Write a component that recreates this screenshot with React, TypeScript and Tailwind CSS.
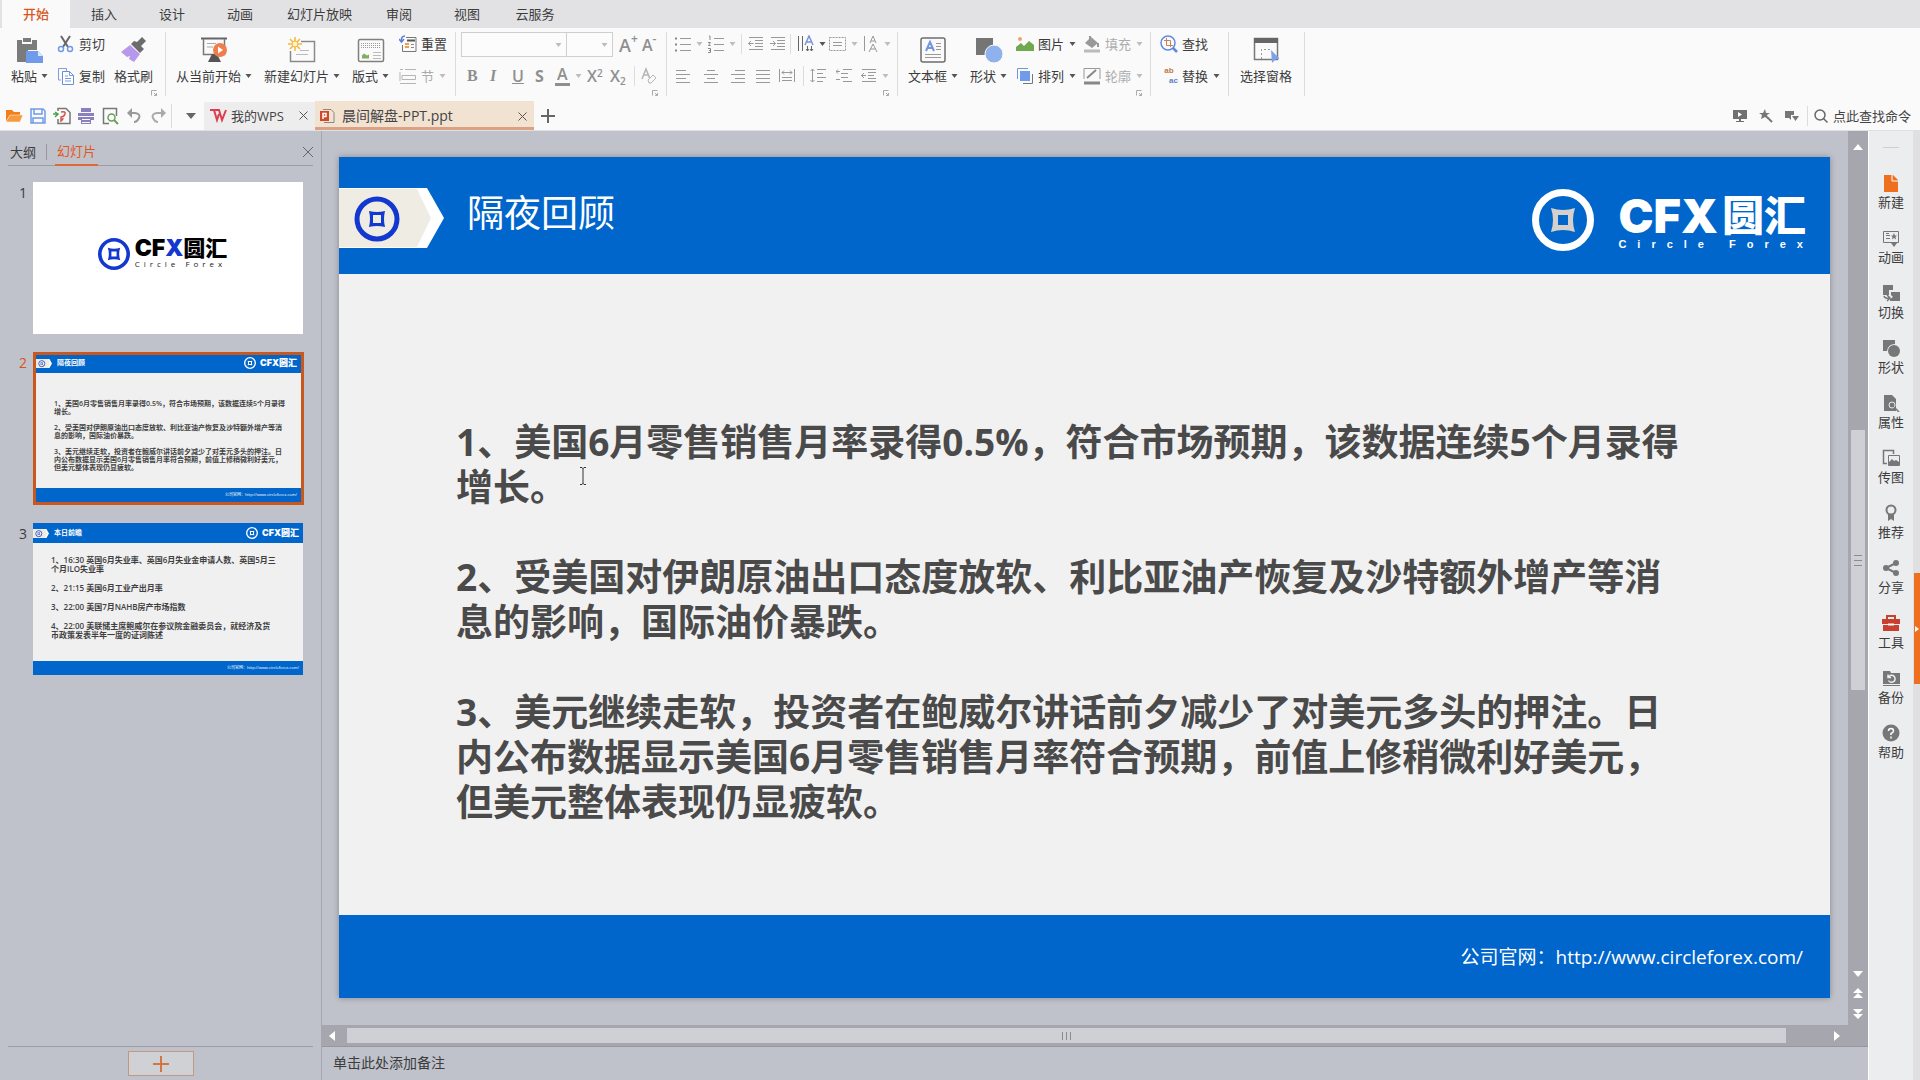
import type { ReactNode } from 'react';

const menuTabs = ['开始', '插入', '设计', '动画', '幻灯片放映', '审阅', '视图', '云服务'];

const overnightLines = [
  ['1、美国6月零售销售月率录得0.5%，符合市场预期，该数据连续5个月录得', '增长。'],
  ['2、受美国对伊朗原油出口态度放软、利比亚油产恢复及沙特额外增产等消', '息的影响，国际油价暴跌。'],
  [
    '3、美元继续走软，投资者在鲍威尔讲话前夕减少了对美元多头的押注。日',
    '内公布数据显示美国6月零售销售月率符合预期，前值上修稍微利好美元，',
    '但美元整体表现仍显疲软。',
  ],
];

const previewLines = [
  ['1、16:30 英国6月失业率、英国6月失业金申请人数、英国5月三', '个月ILO失业率'],
  ['2、21:15 美国6月工业产出月率'],
  ['3、22:00 美国7月NAHB房产市场指数'],
  ['4、22:00 美联储主席鲍威尔在参议院金融委员会，就经济及货', '币政策发表半年一度的证词陈述'],
];

interface IconProps {
  w?: number;
  h?: number;
  children: ReactNode;
  className?: string;
}

function Icon({ w = 18, h = 18, children, className = '' }: IconProps) {
  return (
    <svg width={w} height={h} viewBox={`0 0 ${w} ${h}`} fill="none" className={`shrink-0 ${className}`} aria-hidden="true">
      {children}
    </svg>
  );
}

function Caret({ dim = false }: { dim?: boolean }) {
  return (
    <Icon w={7} h={4}>
      <path d="M0.5 0h6L3.5 4z" fill={dim ? '#bdbdbd' : '#555'} />
    </Icon>
  );
}

function Launcher() {
  return (
    <Icon w={6} h={6} className="absolute right-2 bottom-0">
      <path d="M0.5 5.500V.5h5M3 3l2.500 2.500M5.500 3v2.500H3" stroke="#aaa" />
    </Icon>
  );
}

function Group({ width, children, launcher = false }: { width: string; children: ReactNode; launcher?: boolean }) {
  return (
    <div className={`relative flex h-16 shrink-0 border-r border-[#dcdcdc] ${width}`}>
      {children}
      {launcher && <Launcher />}
    </div>
  );
}

function BigButton({ icon, label, caret = false }: { icon: ReactNode; label: string; caret?: boolean }) {
  return (
    <button type="button" className="flex shrink-0 flex-col items-center gap-px pt-[5px]">
      {icon}
      <span className="flex h-6 items-center gap-1 whitespace-nowrap">
        {label}
        {caret && <Caret />}
      </span>
    </button>
  );
}

interface SmallButtonProps {
  icon: ReactNode;
  label: string;
  caret?: boolean;
  dim?: boolean;
}

function SmallButton({ icon, label, caret = false, dim = false }: SmallButtonProps) {
  return (
    <button type="button" className={`flex h-6 items-center gap-1 whitespace-nowrap ${dim ? 'text-[#ababab]' : ''}`}>
      {icon}
      {label}
      {caret && <span className="ml-px flex"><Caret dim={dim} /></span>}
    </button>
  );
}

function Tool({ width, label, children }: { width: string; label: string; children: ReactNode }) {
  return (
    <button type="button" aria-label={label} className={`flex h-6 shrink-0 items-center gap-[5px] text-[#8f8f8f] ${width}`}>
      {children}
    </button>
  );
}

function Rule() {
  return <span className="mr-[6px] h-5 w-px shrink-0 bg-[#dcdcdc]" />;
}

function RibbonClipboard() {
  return (
    <Group width="w-[166px] pl-[11px]" launcher>
      <BigButton
        label="粘贴"
        caret
        icon={
          <Icon w={28} h={26}>
            <path d="M1 3h6V1h8v2h6v10h-9v12H1z" fill="#7b7b7b" />
            <path d="M6 3h10v4H6z" fill="#fafafb" />
            <path d="M7 2h8v3H7z" fill="#7b7b7b" />
            <path d="M10 14h12l5 5v7H10z" fill="#6f9bea" />
            <path d="M22 14v5h5z" fill="#dbe6fb" />
          </Icon>
        }
      />
      <div className="ml-[9px] flex flex-col gap-2">
        <SmallButton
          label="剪切"
          icon={
            <Icon>
              <path d="M4 1l7 11M13 1L6 12" stroke="#666" strokeWidth="2" />
              <circle cx="4" cy="14" r="2.500" stroke="#6f9bea" strokeWidth="1.500" />
              <circle cx="13" cy="14" r="2.500" stroke="#6f9bea" strokeWidth="1.500" />
            </Icon>
          }
        />
        <SmallButton
          label="复制"
          icon={
            <Icon>
              <path d="M4 13H1.500V1.500h8V4" stroke="#7f9fd8" />
              <path d="M5.500 4.500h7l4 4v9h-11z" stroke="#6f8fd0" fill="#fff" />
              <path d="M12.500 4.500v4h4M8 9h3M8 11.500h6M8 14h6" stroke="#6f9bea" />
            </Icon>
          }
        />
      </div>
      <div className="ml-[9px] flex">
        <BigButton
          label="格式刷"
          icon={
            <Icon w={26} h={26}>
              <path d="M16 5l5-5 4 4-5 5 3 3-4 4L10 7l3-3z" fill="#6c6c6c" />
              <path d="M9 8l10 9-6 8-5-3 1-3-3 1-6-5z" fill="#b898ea" />
            </Icon>
          }
        />
      </div>
    </Group>
  );
}

function RibbonSlides() {
  return (
    <Group width="w-[290px] gap-3 pl-[10px]">
      <BigButton
        label="从当前开始"
        caret
        icon={
          <Icon w={28} h={26}>
            <path d="M1 1.500h26" stroke="#666" strokeWidth="2" />
            <path d="M3.500 2v15.500h21V2" stroke="#777" strokeWidth="1.500" />
            <path d="M7 6.500h9M7 10h6" stroke="#aaa" />
            <path d="M12 17h5l4 8H8z" fill="#555" />
            <circle cx="20" cy="13" r="7" fill="#ee7f4b" />
            <path d="M18 9.500v7l5-3.500z" fill="#fff" />
          </Icon>
        }
      />
      <BigButton
        label="新建幻灯片"
        caret
        icon={
          <Icon w={28} h={26}>
            <path d="M13 4.500h13.500v20h-24V14" stroke="#8a8a8a" strokeWidth="1.500" />
            <path d="M12 13.500h9M8 17.500h12" stroke="#bbb" />
            <path d="M7 0v14M0 7h14M2 2l10 10M12 2L2 12" stroke="#f6b73c" strokeWidth="1.500" />
            <circle cx="7" cy="7" r="3" fill="#fff3c9" stroke="#f6b73c" />
          </Icon>
        }
      />
      <BigButton
        label="版式"
        caret
        icon={
          <Icon w={28} h={26}>
            <rect x="1.500" y="2.500" width="25" height="22" rx="1.500" stroke="#808080" strokeWidth="1.500" />
            <path d="M4 6.500h20M4 8.500h20M4 10.500h20" stroke="#999" strokeDasharray="1 1" />
            <path d="M16 15.500h8M16 18.500h8M16 21.500h8" stroke="#bbb" />
            <path d="M5 21.500v-3l2-2 3 2 2-1v4z" fill="#7fae5e" />
          </Icon>
        }
      />
      <div className="ml-[-2px] flex flex-col gap-2">
        <SmallButton
          label="重置"
          icon={
            <Icon>
              <path d="M7 2.500h10v14H3.500V10" stroke="#777" />
              <path d="M8 5.500h8" stroke="#555" strokeWidth="2" />
              <path d="M6 9h4M6 12h4" stroke="#eda04c" strokeWidth="2" />
              <path d="M12 9.500h3M12 12.500h3" stroke="#888" />
              <path d="M6 1Q2 1 2.500 6M0 4l2.500 3L5 4" stroke="#5f80d8" strokeWidth="1.500" />
            </Icon>
          }
        />
        <SmallButton
          label="节"
          caret
          dim
          icon={
            <Icon>
              <path d="M1 2.500h3M6 2.500h11M1 16.500h16M3 8.500h13.500v4H3zM1 5v9" stroke="#b5b5b5" />
            </Icon>
          }
        />
      </div>
    </Group>
  );
}

function RibbonFont() {
  return (
    <Group width="w-[211px] pl-[5px]" launcher>
      <div className="flex flex-col gap-[7px]">
        <div className="flex h-[25px] items-center">
          <button type="button" aria-label="字体" className="flex h-[25px] w-[106px] items-center justify-end border border-[#cfcfcf] bg-[#fcfcfc] pr-1">
            <Caret dim />
          </button>
          <button type="button" aria-label="字号" className="flex h-[25px] w-[46px] items-center justify-end border border-l-0 border-[#cfcfcf] bg-[#fcfcfc] pr-1">
            <Caret dim />
          </button>
          <button type="button" className="ml-[6px] flex w-[23px] items-start text-lg leading-6 font-semibold text-[#8f8f8f]">
            A<span className="text-xs leading-3">+</span>
          </button>
          <button type="button" className="flex items-start text-base leading-6 font-semibold text-[#8f8f8f]">
            A<span className="text-xs leading-3">-</span>
          </button>
        </div>
        <div className="flex items-center pl-[6px] text-base text-[#8f8f8f]">
          <Tool width="w-[23px]" label="加粗"><b className="font-['Liberation_Serif']">B</b></Tool>
          <Tool width="w-[22px]" label="倾斜"><i className="font-['Liberation_Serif'] font-bold">I</i></Tool>
          <Tool width="w-[23px]" label="下划线"><u className="font-semibold">U</u></Tool>
          <Tool width="w-[20px]" label="阴影"><span className="font-bold">S</span></Tool>
          <Tool width="w-[32px]" label="字体颜色">
            <span className="border-b-3 border-[#8f8f8f] px-[2px] leading-[17px] font-semibold">A</span>
            <Caret dim />
          </Tool>
          <Tool width="w-[23px]" label="上标"><span className="font-semibold">X<sup className="text-[10px]">2</sup></span></Tool>
          <Tool width="w-[24px]" label="下标"><span className="font-semibold">X<sub className="text-[10px]">2</sub></span></Tool>
          <Rule />
          <Tool width="w-[16px]" label="清除格式">
            <Icon w={16} h={18}>
              <path d="M1 12L5 2l4 10M3 8h5" stroke="#b5b5b5" strokeWidth="1.500" />
              <path d="M7 13l5-5 3 3-5 5H8z" stroke="#b5b5b5" fill="#fafafb" />
            </Icon>
          </Tool>
        </div>
      </div>
    </Group>
  );
}

function Lines({ d }: { d: string }) {
  return (
    <Icon w={16} h={18}>
      <path d={d} stroke="#999" />
    </Icon>
  );
}

function RibbonParagraph() {
  return (
    <Group width="w-[231px] pl-2" launcher>
      <div className="flex flex-col gap-2">
        <div className="flex items-center">
          <Tool width="w-[33px]" label="项目符号">
            <Icon w={16} h={18}>
              <path d="M5 3.500h11M5 9.500h11M5 15.500h11" stroke="#999" />
              <path d="M0 3.500h2M0 9.500h2M0 15.500h2" stroke="#888" strokeWidth="2" />
            </Icon>
            <Caret dim />
          </Tool>
          <Tool width="w-[33px]" label="编号">
            <Icon w={16} h={18}>
              <path d="M6 3.500h10M6 9.500h10M6 15.500h10" stroke="#999" />
              <path d="M1 1h1v4M0 7.500h2.500l-2 3h2M0 13.500h2.500v4H0M1 15.500h1" stroke="#888" />
            </Icon>
            <Caret dim />
          </Tool>
          <Rule />
          <Tool width="w-[22px]" label="减少缩进"><Lines d="M1 2.500h14M7 5.500h8M7 8.500h8M7 11.500h8M1 14.500h14M5.500 8.500H0M3 6L.5 8.500 3 11" /></Tool>
          <Tool width="w-[20px]" label="增加缩进"><Lines d="M1 2.500h14M7 5.500h8M7 8.500h8M7 11.500h8M1 14.500h14M0 8.500h5.500M3 6l2.500 2.500L3 11" /></Tool>
          <Rule />
          <Tool width="w-[32px]" label="文字方向">
            <Icon w={17} h={18}>
              <path d="M1.500 1v15M5.500 1v15M10.500 11v5M14.500 11v5M9 14l1.500 2 1.500-2M13 14l1.500 2 1.500-2" stroke="#666" />
              <path d="M8 10l4-9 4 9M9.500 7h5" stroke="#7d93d8" strokeWidth="1.500" />
            </Icon>
            <Caret />
          </Tool>
          <Tool width="w-[35px]" label="对齐文本">
            <Icon w={17} h={18}>
              <rect x="0.500" y="2.500" width="16" height="13" stroke="#999" strokeDasharray="2 1" />
              <path d="M4 7.500h9M4 10.500h9" stroke="#999" />
            </Icon>
            <Caret dim />
          </Tool>
          <Tool width="w-[24px]" label="字符间距">
            <Icon w={15} h={18}>
              <path d="M.5 1v15M6 8l3-7 3 7M7 6h4M5 17l4-8 4 8M6.500 14h5" stroke="#999" />
            </Icon>
            <Caret dim />
          </Tool>
        </div>
        <div className="flex items-center">
          <Tool width="w-[28px]" label="左对齐"><Lines d="M1 3.500h10M1 7.500h14M1 11.500h10M1 15.500h14" /></Tool>
          <Tool width="w-[27px]" label="居中"><Lines d="M4 3.500h8M1 7.500h14M4 11.500h8M1 15.500h14" /></Tool>
          <Tool width="w-[25px]" label="右对齐"><Lines d="M5 3.500h10M1 7.500h14M5 11.500h10M1 15.500h14" /></Tool>
          <Tool width="w-[24px]" label="两端对齐"><Lines d="M1 3.500h14M1 7.500h14M1 11.500h14M1 15.500h14" /></Tool>
          <Tool width="w-[24px]" label="分散对齐"><Lines d="M.5 2v13M15.500 2v13M3 5.500h10M5 3.500l-2 2 2 2M11 3.500l2 2-2 2M3 10.500h10M3 13.500h10" /></Tool>
          <Rule />
          <Tool width="w-[26px]" label="行距"><Lines d="M7 2.500h9M7 6.500h6M7 10.500h9M7 14.500h6M2.500 2v13M.5 4l2-2 2 2M.5 13l2 2 2-2" /></Tool>
          <Tool width="w-[25px]" label="段前间距"><Lines d="M7 2.500h9M5 6.500h7M5 10.500h7M7 14.500h9M4 4.500H0M2 2.500l-2 2 2 2M4 12.500H0" /></Tool>
          <Tool width="w-[24px]" label="段后间距">
            <Lines d="M1 2.500h14M7 5.500h8M7 8.500h6M7 11.500h8M1 14.500h14M0 8.500h5M3 6L.5 8.500 3 11" />
            <Caret dim />
          </Tool>
        </div>
      </div>
    </Group>
  );
}

function RibbonInsert() {
  return (
    <Group width="w-[253px] pl-[10px]" launcher>
      <BigButton
        label="文本框"
        caret
        icon={
          <Icon w={26} h={26}>
            <rect x="1" y="1" width="24" height="24" rx="2" stroke="#6d6d6d" strokeWidth="1.500" />
            <path d="M6 14l4-9 4 9M7.500 11h5" stroke="#7296dd" strokeWidth="2" />
            <path d="M16 6.500h5M16 9.500h5M16 12.500h5M5 17.500h16M5 20.500h16" stroke="#999" />
          </Icon>
        }
      />
      <div className="ml-3 flex">
        <BigButton
          label="形状"
          caret
          icon={
            <Icon w={28} h={26}>
              <path d="M1 1h17v17H1z" fill="#757575" />
              <circle cx="19" cy="17" r="9" fill="#8fb2ee" stroke="#fafafb" />
            </Icon>
          }
        />
      </div>
      <div className="ml-[9px] flex flex-col gap-2">
        <SmallButton
          label="图片"
          caret
          icon={
            <Icon>
              <path d="M0 16v-4l5-4 3 3 5-5 5 4v6z" fill="#6fa84f" />
              <circle cx="4" cy="4" r="2" fill="#f0a26b" />
            </Icon>
          }
        />
        <SmallButton
          label="排列"
          caret
          icon={
            <Icon>
              <path d="M1.500 12V1.500H12" stroke="#7296dd" />
              <path d="M4 4h10v10H4z" fill="#6f9bea" />
              <path d="M7 16.500h9.500V7" stroke="#777" />
            </Icon>
          }
        />
      </div>
      <div className="ml-[7px] flex flex-col gap-2">
        <SmallButton
          label="填充"
          caret
          dim
          icon={
            <Icon>
              <path d="M2 8l6-6 7 6-6 5z" fill="#999" />
              <path d="M7 1v6M15 8v4" stroke="#999" strokeWidth="2" />
              <path d="M1 16h16" stroke="#bbb" strokeWidth="3" />
            </Icon>
          }
        />
        <SmallButton
          label="轮廓"
          caret
          dim
          icon={
            <Icon>
              <path d="M1 12V1.500h16V12" stroke="#999" />
              <path d="M4 11l9-8" stroke="#888" strokeWidth="2" />
              <path d="M1 16h16" stroke="#888" strokeWidth="3" />
            </Icon>
          }
        />
      </div>
    </Group>
  );
}

function RibbonEdit() {
  return (
    <>
      <Group width="w-[78px] pl-[9px]">
        <div className="flex flex-col gap-2">
          <SmallButton
            label="查找"
            icon={
              <Icon>
                <circle cx="8" cy="8" r="7" stroke="#5d8ae0" strokeWidth="1.500" />
                <path d="M13 13l4 4" stroke="#5d8ae0" strokeWidth="2.500" />
                <path d="M6.500 3v7.500H13M4 5.500h6.500V12" stroke="#c98055" />
              </Icon>
            }
          />
          <SmallButton
            label="替换"
            caret
            icon={
              <span className="flex w-[18px] flex-col text-[8px] leading-[10px] font-bold font-['Liberation_Sans',sans-serif]" aria-hidden="true">
                <span className="text-[#c07a48]">ab</span>
                <span className="text-right text-[#5f7fc8]">ac</span>
              </span>
            }
          />
        </div>
      </Group>
      <Group width="w-[76px] pl-[11px]">
        <BigButton
          label="选择窗格"
          icon={
            <Icon w={26} h={26}>
              <path d="M1.500 1.500h23v21h-23z" stroke="#777" strokeWidth="1.500" />
              <path d="M1 1h24v5H1z" fill="#666" />
              <path d="M8.500 22V12.500H19" stroke="#999" strokeDasharray="2 2" />
              <path d="M18 13l9 9h-4l-4 4z" fill="#7da2ea" />
            </Icon>
          }
        />
      </Group>
    </>
  );
}

function CloseMark() {
  return (
    <Icon w={9} h={9}>
      <path d="M.5.5l8 8M8.500.5l-8 8" stroke="#555" />
    </Icon>
  );
}

function QuickBar() {
  return (
    <div className="flex h-[31px] shrink-0 items-center border-b border-[#dfe0e3] bg-[#fafafb] pt-px pl-[5px]">
      <div className="flex items-center gap-[6px]">
        <button type="button" aria-label="打开">
          <Icon><path d="M1 15V3h6l2 2h6v3H5z" fill="#f07f1c" /><path d="M5 8h13l-3 7H1z" fill="#f79a3e" stroke="#fafafb" strokeWidth=".5" /></Icon>
        </button>
        <button type="button" aria-label="保存">
          <Icon><path d="M2 2h12l2 2v12H2z" stroke="#6f9bea" strokeWidth="1.500" /><path d="M5 2v5h8V2M4 16v-5h10v5" stroke="#6f9bea" strokeWidth="1.500" /></Icon>
        </button>
        <button type="button" aria-label="输出为PDF">
          <Icon><path d="M5 4V1.500h8l4 4v11H5V12" stroke="#777" strokeWidth="1.500" /><path d="M0 7h4M2 5l3 2-3 3" stroke="#4fa04f" strokeWidth="1.500" /><path d="M8 5q5-1 4 2t-4 3v4q2-1 2-3" stroke="#d5574b" strokeWidth="1.500" /></Icon>
        </button>
        <button type="button" aria-label="打印">
          <Icon><path d="M4 1h10v4H4zM1 6h16v7H1zM4 12h10v5H4z" fill="#8b80bf" /><path d="M5 12.500h8M5 15.500h8M1 9.500h16" stroke="#fafafb" /></Icon>
        </button>
        <button type="button" aria-label="打印预览">
          <Icon><path d="M8 16.500H2.500v-15h13V9" stroke="#777" strokeWidth="1.500" /><circle cx="10.500" cy="10.500" r="3.500" stroke="#6a9e5a" strokeWidth="1.500" /><path d="M13 13l4 4" stroke="#6a9e5a" strokeWidth="2" /></Icon>
        </button>
        <button type="button" aria-label="撤销">
          <Icon><path d="M6 6h4q6 1 4 5t-5 4" stroke="#999" strokeWidth="2" /><path d="M7 1v10L2 6z" fill="#999" /></Icon>
        </button>
        <button type="button" aria-label="恢复">
          <Icon><path d="M12 6H8Q2 7 4 11t5 4" stroke="#aaa" strokeWidth="2" /><path d="M12 1v10l5-5z" fill="#aaa" /></Icon>
        </button>
      </div>
      <span className="ml-1 h-6 w-px bg-[#dcdcdc]" />
      <button type="button" aria-label="自定义快速访问工具栏" className="ml-[14px]">
        <Icon w={10} h={6}><path d="M0 0h10L5 6z" fill="#666" /></Icon>
      </button>
      <div className="ml-2 flex h-[28px] w-[111px] items-center bg-[#ededee] pl-[5px]">
        <Icon w={18} h={14}>
          <path d="M1 1h4l3 10 2-6M6 1h4l3 10 4-10" stroke="#dc3d4f" strokeWidth="2" />
        </Icon>
        <button type="button" className="ml-1 w-[68px] text-left whitespace-nowrap text-[#444]">我的WPS</button>
        <button type="button" aria-label="关闭我的WPS"><CloseMark /></button>
      </div>
      <div className="flex h-full w-[219px] items-center border-b-3 border-[#dba183] bg-[#f2e2d2] pt-1 pl-1">
        <Icon w={16} h={16}>
          <path d="M4 1.500h8l3 3v10H5" stroke="#888" />
          <path d="M1 3h9v10H1z" fill="#d2492a" />
          <path d="M4 11V5.500h3v3H4" stroke="#fff" strokeWidth="1.500" />
        </Icon>
        <button type="button" className="ml-[7px] w-[176px] text-left text-sm whitespace-nowrap text-[#444]">晨间解盘-PPT.ppt</button>
        <button type="button" aria-label="关闭晨间解盘"><CloseMark /></button>
      </div>
      <button type="button" aria-label="新建标签" className="ml-[7px]">
        <Icon w={14} h={14}><path d="M7 0v14M0 7h14" stroke="#666" strokeWidth="2" /></Icon>
      </button>
      <div className="ml-auto flex items-center pr-[9px]">
        <button type="button" aria-label="放映">
          <Icon w={14} h={14}><path d="M0 1h14v9H0zM6 10h2v2H6zM3 12h8v1H3z" fill="#707070" /><path d="M5 3v5l4-2.500z" fill="#fff" /></Icon>
        </button>
        <button type="button" aria-label="皮肤" className="ml-3">
          <Icon w={14} h={14}><path d="M6 0l1 4h4L8 6l1 4-3-2-4 2 1-4-3-2h4z" fill="#777" /><path d="M8 8l5 5" stroke="#777" strokeWidth="2" /></Icon>
        </button>
        <button type="button" aria-label="反馈" className="ml-3">
          <Icon w={14} h={14}><path d="M0 2h9v4H6v5L4 9H0zM7 7h7l-3.500 5z" fill="#777" /></Icon>
        </button>
        <span className="mr-[6px] ml-2 h-5 w-px bg-[#dcdcdc]" />
        <button type="button" className="flex items-center gap-[5px] whitespace-nowrap text-[#444]">
          <Icon w={14} h={14}><circle cx="6" cy="6" r="5" stroke="#666" strokeWidth="1.500" /><path d="M9.500 9.500l4 4" stroke="#666" strokeWidth="1.500" /></Icon>
          点此查找命令
        </button>
      </div>
    </div>
  );
}

function CoinMark({ size, ring, core = ring }: { size: number; ring: string; core?: string }) {
  return (
    <svg width={size} height={size} viewBox="0 0 62 62" fill="none" className="shrink-0" aria-hidden="true">
      <circle cx="31" cy="31" r="27.500" stroke={ring} strokeWidth="7" />
      <path
        d="M19 19q12 4 24 0q-4 12 0 24q-12-4-24 0q4-12 0-24zM26 26v10h10V26z"
        fill={core}
        fillRule="evenodd"
      />
    </svg>
  );
}

function ArrowBadge({ w, h }: { w: number; h: number }) {
  return (
    <svg width={w} height={h} viewBox="0 0 105 60" className="shrink-0" aria-hidden="true">
      <path d="M0 0h88l17 30-17 30H0z" fill="#fff" />
      <path d="M0 1h78l14 29-14 29H0z" fill="#efede3" />
      <circle cx="38" cy="31" r="20" fill="none" stroke="#1238d0" strokeWidth="5" />
      <path d="M30 23q8 2 16 0q-2 8 0 16q-8-2-16 0q2-8 0-16zM34 27v8h8v-8z" fill="#1238d0" fillRule="evenodd" />
    </svg>
  );
}

interface ThumbProps {
  title: string;
  lines: string[][];
  headClass: string;
  bodyClass: string;
  groupClass: string;
}

function ThumbSlide({ title, lines, headClass, bodyClass, groupClass }: ThumbProps) {
  return (
    <div className="flex h-full flex-col bg-[#f0f0f0]">
      <div className={`flex shrink-0 items-center bg-[#0066cc] pr-1 ${headClass}`}>
        <ArrowBadge w={16} h={11} />
        <span className="ml-[5px] text-[7px] leading-3 font-bold text-white">{title}</span>
        <span className="ml-auto flex items-center gap-1 text-[9px] leading-3 font-black text-white">
          <CoinMark size={12} ring="#fff" />
          <span className="font-['Inter','Noto_Sans_CJK_SC',sans-serif]">CFX圆汇</span>
        </span>
      </div>
      <div className={`grow font-semibold whitespace-nowrap text-[#404040] ${bodyClass}`}>
        {lines.map((group) => (
          <p key={group[0]} className={groupClass}>
            {group.map((line) => (
              <span key={line} className="block">{line}</span>
            ))}
          </p>
        ))}
      </div>
      <div className="flex h-[14px] shrink-0 items-center justify-end bg-[#0066cc] pr-1 text-[4px] text-white">
        公司官网：http://www.circleforex.com/
      </div>
    </div>
  );
}

function SlidePanel() {
  return (
    <aside className="flex w-[322px] shrink-0 flex-col border-r border-[#a4a6b0] px-2">
      <div className="mt-[10px] flex h-[25px] shrink-0 items-center border-b border-[#9b9ca4] pb-[3px]">
        <button type="button" className="px-[2px]">大纲</button>
        <span className="mx-[8px] h-4 w-px bg-[#95969e]" />
        <button type="button" className="-mb-[3px] h-[25px] border-b-2 border-[#e06a35] px-[2px] pb-[2px] text-[#e2571a]">幻灯片</button>
        <button type="button" aria-label="关闭窗格" className="ml-auto">
          <Icon w={10} h={10}><path d="M0 0l10 10M10 0L0 10" stroke="#666" /></Icon>
        </button>
      </div>
      <ol className="mt-4 flex grow flex-col gap-[18px] text-sm">
        <li className="flex">
          <span className="w-[25px] pt-px pr-[6px] text-right leading-5">1</span>
          <button type="button" className="flex h-[152px] w-[270px] items-center justify-center gap-[5px] bg-white pr-[11px] pb-2">
            <CoinMark size={32} ring="#1238d0" />
            <span className="flex flex-col items-start">
              <span className="flex text-[23px] leading-5 font-black text-black font-['Inter','Noto_Sans_CJK_SC',sans-serif]">
                CF<span className="text-[#1238d0]">X</span><span className="text-[22px]">圆汇</span>
              </span>
              <span className="text-[8px] leading-3 tracking-[4px] text-[#222]">Circle Forex</span>
            </span>
          </button>
        </li>
        <li className="flex">
          <span className="w-[25px] pt-px pr-[6px] text-right leading-5 text-[#d8551c]">2</span>
          <button type="button" className="h-[153px] w-[271px] border-3 border-[#c9581f] text-left">
            <ThumbSlide
              title="隔夜回顾"
              lines={overnightLines}
              headClass="h-[18px] pb-[2px]"
              bodyClass="pt-[27px] pl-[18px] text-[7px] leading-[8px]"
              groupClass="mb-[8px]"
            />
          </button>
        </li>
        <li className="flex">
          <span className="w-[25px] pt-px pr-[6px] text-right leading-5">3</span>
          <button type="button" className="h-[152px] w-[270px] text-left">
            <ThumbSlide
              title="本日前瞻"
              lines={previewLines}
              headClass="h-5"
              bodyClass="pt-[12px] pl-[18px] text-[8px] leading-[9px]"
              groupClass="mb-[10px]"
            />
          </button>
        </li>
      </ol>
      <div className="flex h-[34px] shrink-0 items-center justify-center border-t border-[#9b9ca4]">
        <button type="button" aria-label="新建幻灯片" className="flex h-[25px] w-[66px] items-center justify-center border border-[#c09a80] bg-[#d0d1d5]">
          <Icon w={16} h={16}><path d="M8 0v16M0 8h16" stroke="#cf7645" strokeWidth="2" /></Icon>
        </button>
      </div>
    </aside>
  );
}

function Slide() {
  return (
    <article className="flex grow flex-col bg-[#f1f1f1] shadow-[0_0_6px_rgba(0,0,0,0.3)]">
      <header className="flex h-[117px] shrink-0 items-center bg-[#0066cc] pt-1 pr-4">
        <ArrowBadge w={105} h={60} />
        <h1 className="ml-[23px] pb-[10px] text-[37px] leading-[50px] text-white">隔夜回顾</h1>
        <div className="ml-auto flex items-center gap-6 pt-1 text-white">
          <CoinMark size={62} ring="#fff" core="#d6d0cc" />
          <div className="flex flex-col items-start pt-2">
            <span className="flex items-center text-[47px] leading-[42px] font-black font-['Inter','Noto_Sans_CJK_SC',sans-serif]">
              CFX<span className="ml-1 text-[42px]">圆汇</span>
            </span>
            <span className="text-[11px] leading-[15px] font-bold tracking-[11px] font-['Liberation_Sans',sans-serif]">Circle Forex</span>
          </div>
        </div>
      </header>
      <div className="relative grow pt-[145px] pl-[117px] text-[37px] leading-[45px] font-bold whitespace-nowrap text-[#4a4a4a]">
        {overnightLines.map((group) => (
          <p key={group[0]} className="mb-[45px]">
            {group.map((line) => (
              <span key={line} className="block">{line}</span>
            ))}
          </p>
        ))}
        <Icon w={8} h={18} className="absolute top-[193px] left-[240px]">
          <path d="M1 .5h2l1 1 1-1h2M4 1v16M1 17.500h2l1-1 1 1h2" stroke="#333" />
        </Icon>
      </div>
      <footer className="flex h-[83px] shrink-0 items-center justify-end bg-[#0066cc] pr-[27px] text-[19px] text-white">
        <p>公司官网：<a href="http://www.circleforex.com/">http://www.circleforex.com/</a></p>
      </footer>
    </article>
  );
}

function VerticalScroll() {
  return (
    <div className="flex w-5 shrink-0 flex-col items-center bg-[#a6a7ae]">
      <Icon w={10} h={6} className="mt-[13px]"><path d="M0 6h10L5 0z" fill="#fff" /></Icon>
      <div className="mt-[280px] flex h-[260px] w-[14px] flex-col items-center justify-center gap-[4px] bg-[#cfd0d5]">
        <span className="h-px w-2 bg-[#8b8c92]" />
        <span className="h-px w-2 bg-[#8b8c92]" />
        <span className="h-px w-2 bg-[#8b8c92]" />
      </div>
      <div className="mt-auto flex flex-col items-center gap-[11px] pb-[6px]">
        <Icon w={10} h={6}><path d="M0 0h10L5 6z" fill="#fff" /></Icon>
        <Icon w={10} h={10}><path d="M0 5h10L5 0zM0 10h10L5 5z" fill="#fff" /></Icon>
        <Icon w={10} h={10}><path d="M0 0h10L5 5zM0 5h10l-5 5z" fill="#fff" /></Icon>
      </div>
    </div>
  );
}

function HorizontalScroll() {
  return (
    <div className="flex h-[22px] shrink-0 items-center border-b border-[#97989f] bg-[#a6a7ae] pl-[7px]">
      <Icon w={6} h={10}><path d="M6 0v10L0 5z" fill="#fff" /></Icon>
      <div className="ml-[12px] flex h-[15px] grow items-center justify-center gap-[3px] bg-[#cfd0d5]">
        <span className="h-2 w-px bg-[#8b8c92]" />
        <span className="h-2 w-px bg-[#8b8c92]" />
        <span className="h-2 w-px bg-[#8b8c92]" />
      </div>
      <Icon w={6} h={10} className="mr-[28px] ml-[48px]"><path d="M0 0v10l6-5z" fill="#fff" /></Icon>
    </div>
  );
}

const sideTools: { label: string; icon: ReactNode }[] = [
  { label: '新建', icon: <><path d="M2 1h9l5 5v12H2z" fill="#ee6f1e" /><path d="M10 1v6h6" stroke="#fff" /></> },
  { label: '动画', icon: <><path d="M1.500 2.500h15v11h-15zM4 6.500h4M4 9.500h4M4 4.500h3" stroke="#777" /><path d="M12 4l1 2.500h2l-1.500 1.500.5 2.500-2-1.500-2 1.500.5-2.500L9 6.500h2zM9 14h6l-3 4z" fill="#777" /></> },
  { label: '切换', icon: <><path d="M1 1h10v5H7v5H1z" fill="#777" /><path d="M9 8h9v9H8v-2l3-2-2-2z" fill="#777" /><path d="M2 12q1 3 5 2M5 11l3 3-3 3" stroke="#777" strokeWidth="1.500" /></> },
  { label: '形状', icon: <><path d="M1 1h12v4q-7 0-8 7H1z" fill="#777" /><circle cx="12" cy="12" r="6" fill="#777" /></> },
  { label: '属性', icon: <><path d="M2 1h8l4 4v12H2z" fill="#777" /><circle cx="10" cy="11" r="3" fill="#777" stroke="#ecedef" /><path d="M12 13l5 5" stroke="#777" strokeWidth="1.500" /></> },
  { label: '传图', icon: <><path d="M5 14.500H1.500v-13h10V5" stroke="#777" strokeWidth="1.500" /><path d="M6.500 6.500h11v10h-11z" stroke="#777" /><path d="M7 16v-3l3-3 2 2 2-1 3 2v3z" fill="#777" /></> },
  { label: '推荐', icon: <><circle cx="9" cy="6" r="4.500" stroke="#777" strokeWidth="2" /><path d="M6 10v7l3-2 3 2v-7z" fill="#777" /></> },
  { label: '分享', icon: <><path d="M14 4L4 9l10 5" stroke="#777" strokeWidth="2" /><circle cx="14" cy="4" r="3" fill="#777" /><circle cx="4" cy="9" r="3" fill="#777" /><circle cx="14" cy="14" r="3" fill="#777" /></> },
  { label: '工具', icon: <><path d="M5 5V2h8v3" stroke="#c8402e" strokeWidth="2" /><path d="M0 5h18v5H0zM1 11h16v6H1z" fill="#c8402e" /><path d="M6 10.500h6" stroke="#fff" strokeWidth="2" /></> },
  { label: '备份', icon: <><path d="M1 2h7l1 2h9v11H1z" fill="#777" /><path d="M1 16.500h17" stroke="#777" /><path d="M7 7.500a3.500 3.500 0 11-.5 4M6 5.500v3h3" stroke="#ecedef" strokeWidth="1.500" /></> },
  { label: '帮助', icon: <><circle cx="9" cy="9" r="8.500" fill="#777" /><path d="M6.500 7q0-2.500 2.500-2.500T11.500 7Q11.500 8.500 9 9.500V11M9 12.500v2" stroke="#fff" strokeWidth="1.500" /></> },
];

function SideToolbar() {
  return (
    <nav className="relative flex w-[52px] shrink-0 border-l border-white bg-[#ecedef]">
      <div className="flex grow flex-col items-center">
        <span className="mt-[16px] mb-[22px] h-px w-4 shrink-0 bg-[#cfcfd2]" />
        {sideTools.map((tool) => (
          <button key={tool.label} type="button" className="flex h-[55px] shrink-0 flex-col items-center pt-1">
            <Icon>{tool.icon}</Icon>
            <span>{tool.label}</span>
          </button>
        ))}
      </div>
      <div className="w-[7px] bg-[#e0e0e3]" />
      <button type="button" aria-label="展开" className="absolute top-[442px] right-0 flex h-[111px] w-[6px] items-center justify-center bg-[#ee6f1e]">
        <Icon w={4} h={6}><path d="M0 0v6l4-3z" fill="#fff" /></Icon>
      </button>
    </nav>
  );
}

export default function App() {
  return (
    <div className="flex h-screen flex-col overflow-hidden bg-[#bfc2cb] text-[13px] leading-5 text-[#3c3c3c] font-['Open_Sans','Noto_Sans_CJK_SC',sans-serif]">
      {/* Menu tabs */}
      <nav className="flex h-7 shrink-0 bg-[#e2e2e4] pl-[2px]">
        {menuTabs.map((tab, i) => (
          <button
            key={tab}
            type="button"
            className={`min-w-[68px] px-[13px] ${i === 0 ? 'bg-[#fafafb] font-medium text-[#d8551c]' : ''}`}
          >
            {tab}
          </button>
        ))}
      </nav>

      {/* Ribbon */}
      <div className="flex h-[72px] shrink-0 bg-[#fafafb] pt-1">
        <RibbonClipboard />
        <RibbonSlides />
        <RibbonFont />
        <RibbonParagraph />
        <RibbonInsert />
        <RibbonEdit />
      </div>

      <QuickBar />

      <div className="flex min-h-0 grow">
        <SlidePanel />
        <main className="flex min-w-0 grow flex-col">
          <div className="flex min-h-0 grow">
            <div className="flex min-w-0 grow pt-[26px] pr-[18px] pb-[27px] pl-[17px]">
              <Slide />
            </div>
            <VerticalScroll />
          </div>
          <HorizontalScroll />
          <p className="h-[33px] shrink-0 pl-[11px] text-sm leading-8">单击此处添加备注</p>
        </main>
        <SideToolbar />
      </div>
    </div>
  );
}
